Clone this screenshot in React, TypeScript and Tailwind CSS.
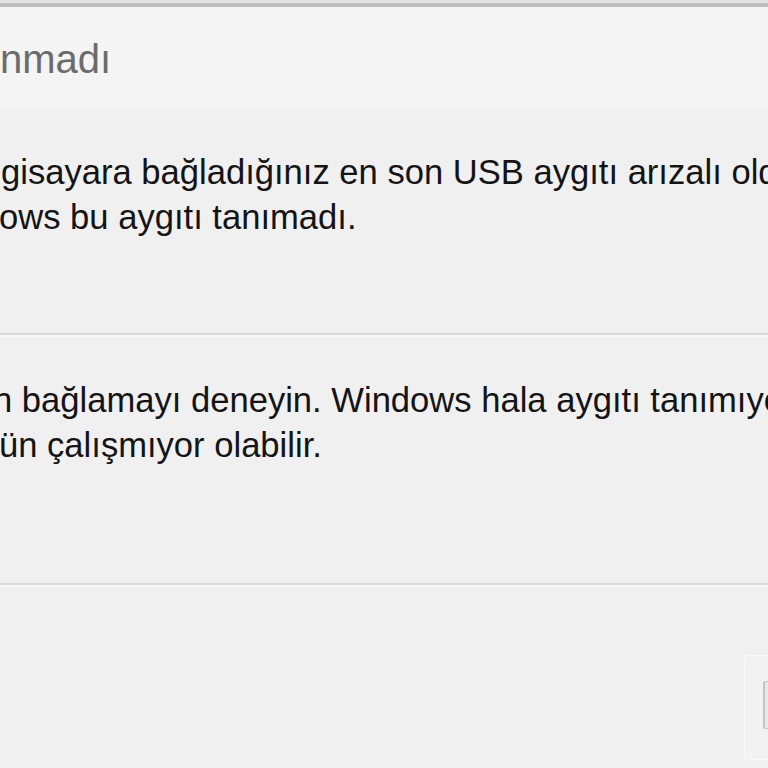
import * as React from 'react';

const bodyFont = { fontFamily: '"Liberation Sans", Arial, sans-serif' };

function Divider() {
  return (
    <div className="w-full">
      <div className="h-[2px] bg-[#d9d9d9]" />
      <div className="h-[2px] bg-[#f8f8f8]" />
    </div>
  );
}

function TextLine({ children, className = '' }: { children: React.ReactNode; className?: string }) {
  return (
    <div className={`whitespace-nowrap text-[34.6px] leading-[45px] text-[#141414] ${className}`}>
      {children}
    </div>
  );
}

export default function App() {
  return (
    <div
      className="w-[768px] h-[768px] overflow-hidden bg-[#f0f0f0] flex flex-col"
      style={bodyFont}
    >
      {/* window top edge */}
      <div className="h-[3px] bg-[#e3e3e3]" />
      <div className="h-[4px] bg-[#bdbdbd]" />

      {/* title band */}
      <div className="h-[101px] bg-[#f4f4f4] pt-[28px] overflow-hidden">
        <div className="whitespace-nowrap text-[40px] leading-[48px] text-[#6b6b6b]">nmadı</div>
      </div>

      {/* message */}
      <div className="h-[225px] pt-[42px] overflow-hidden">
        <TextLine className="ml-[1px]">
          gisayara bağladığınız en son USB aygıtı arızalı olduğundan Windows
        </TextLine>
        <TextLine className="-ml-[1px]">ows bu aygıtı tanımadı.</TextLine>
      </div>

      <Divider />

      {/* recommendation */}
      <div className="h-[246px] pt-[41px] overflow-hidden">
        <TextLine className="-ml-[7px]">
          n bağlamayı deneyin. Windows hala aygıtı tanımıyorsa, aygıtınız
        </TextLine>
        <TextLine className="-ml-[1px]">ün çalışmıyor olabilir.</TextLine>
      </div>

      <Divider />

      {/* buttons row */}
      <div className="flex-1 flex justify-end pt-[68px] -mr-[16px]">
        <div className="w-[40px] h-[105px] rounded-[3px] border border-[#f9f9f9] bg-[#f2f2f2] pl-[18px] pt-[25px]">
          <div className="h-[48px] w-full rounded-l-[2px] border-l-2 border-t border-b border-[#c4c4c4] bg-[#e9e9e9]" />
        </div>
      </div>
    </div>
  );
}
